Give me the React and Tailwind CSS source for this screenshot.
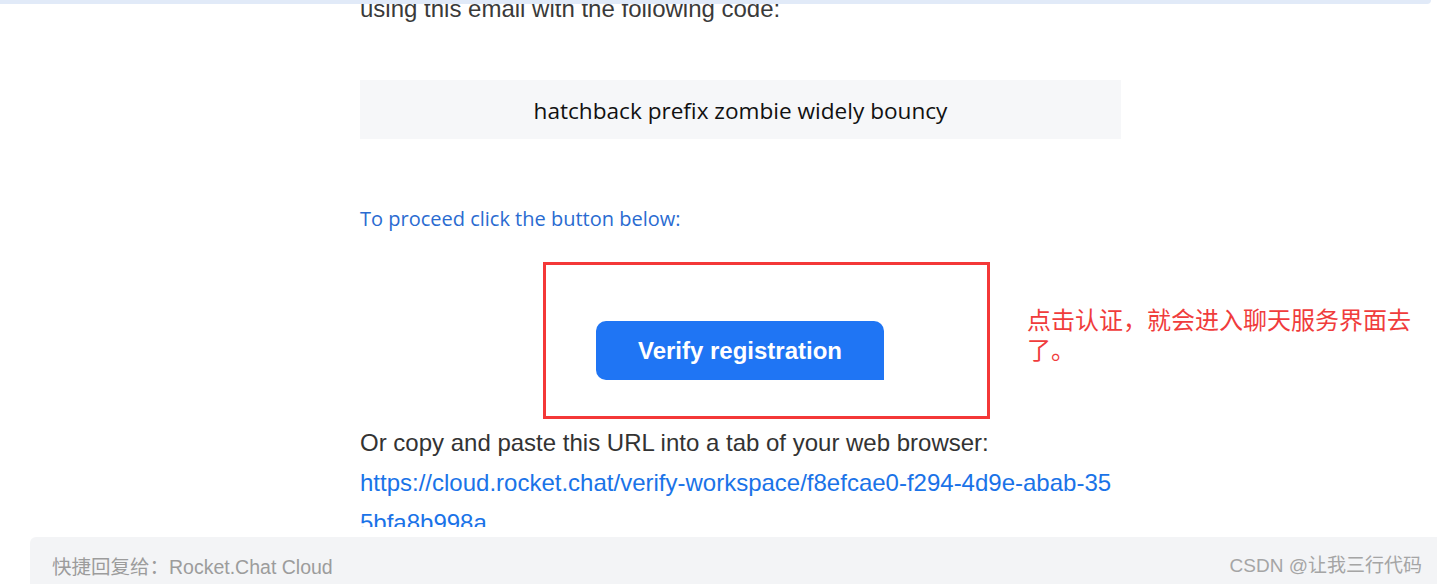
import React from 'react';

const VerifyEmail = () => {
    return (
        <div className="relative w-[1437px] h-[584px] bg-white overflow-hidden">
            {/* top header strip */}
            <div className="absolute top-0 left-0 w-[1431px] h-[4px] bg-[#e1eaf8] rounded-br-md z-10" />

            {/* mail body, scrolled */}
            <div className="h-[527px] overflow-hidden">
                <div className="ml-[360px] w-[761px]">
                    <p className="-mt-[6px] h-[30px] text-[24px] leading-[30px] text-[#3a3a3a] font-['Liberation_Sans',Arial,sans-serif] whitespace-nowrap">
                        using this email with the following code:
                    </p>

                    <div className="mt-[56px] h-[59px] bg-[#f6f7f9] flex items-center justify-center">
                        <span className="text-[22.6px] text-[#111] font-['Open_Sans',sans-serif] pt-[2px]">
                            hatchback prefix zombie widely bouncy
                        </span>
                    </div>

                    <p className="mt-[65px] h-[30px] text-[20px] leading-[30px] text-[#2a6bd1] font-['Open_Sans',sans-serif]">
                        To proceed click the button below:
                    </p>

                    <div className="mt-[28px] flex items-start">
                        <div className="ml-[183px] w-[447px] h-[157px] shrink-0 border-[3px] border-[#f43838] pt-[56px] pl-[50px]">
                            <button className="w-[288px] h-[59px] bg-[#1f75f4] text-white rounded-t-[10px] rounded-bl-[10px] text-[24px] font-bold font-['Liberation_Sans',Arial,sans-serif]">
                                Verify registration
                            </button>
                        </div>
                        <div className="ml-[37px] mt-[42px] w-[400px] shrink-0 text-[24px] leading-[30px] text-[#f03c3c] font-['Noto_Sans_CJK_SC',sans-serif]">
                            点击认证，就会进入聊天服务界面去了。
                        </div>
                    </div>

                    <div className="mt-[4px] text-[24px] leading-[40px] font-['Liberation_Sans',Arial,sans-serif]">
                        <p className="text-[#333]">Or copy and paste this URL into a tab of your web browser:</p>
                        <a className="text-[#1a73e8] break-all block">
                            https://cloud.rocket.chat/verify-workspace/f8efcae0-f294-4d9e-abab-355bfa8b998a
                        </a>
                    </div>
                </div>
            </div>

            {/* quick reply bar */}
            <div className="mt-[10px] ml-[30px] h-[47px] bg-[#f3f4f6] rounded-tl-md flex items-center justify-between pl-[22px] pr-[15px]">
                <span className="text-[19.5px] text-[#9c9c9c] font-['Liberation_Sans','Noto_Sans_CJK_SC',sans-serif] pt-[14px]">
                    快捷回复给：Rocket.Chat Cloud
                </span>
                <span className="text-[19px] text-[#a5a5a5] font-['Liberation_Sans','Noto_Sans_CJK_SC',sans-serif] pt-[12px]">
                    CSDN @让我三行代码
                </span>
            </div>
        </div>
    );
};

export default function App() {
    return <VerifyEmail />;
}
